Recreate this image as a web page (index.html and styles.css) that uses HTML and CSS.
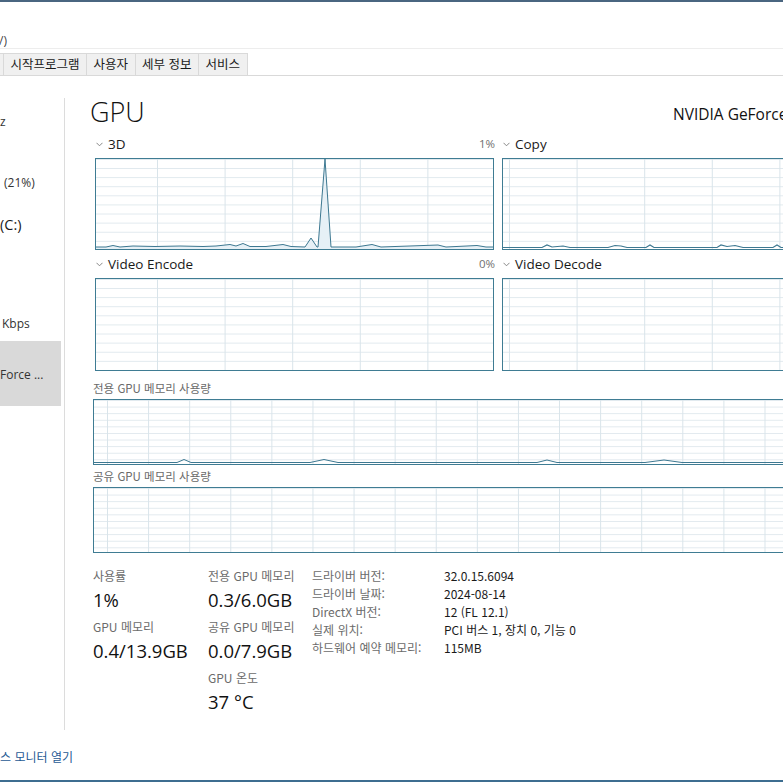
FILE: index.html
```html
<!DOCTYPE html>
<html lang="ko">
<head>
<meta charset="utf-8">
<title>작업 관리자 - GPU</title>
<link rel="stylesheet" href="styles.css">
</head>
<body>
<div class="window">
  <div class="titlebar"></div>
  <div class="menubar"><span class="menu-item">/)</span></div>
  <div class="tabbar">
    <div class="tab tab-cut"></div>
    <div class="tab">시작프로그램</div>
    <div class="tab">사용자</div>
    <div class="tab">세부 정보</div>
    <div class="tab">서비스</div>
  </div>

  <div class="main">
    <nav class="sidebar">
      <div class="side-frag f-cpu">z</div>
      <div class="side-frag f-mem">(21%)</div>
      <div class="side-frag side-title f-disk">(C:)</div>
      <div class="side-frag f-eth">Kbps</div>
      <div class="side-item selected"><div class="side-frag">Force ...</div></div>
    </nav>

    <section class="content">
      <header class="title-row">
        <h1 class="title">GPU</h1>
        <div class="gpu-name">NVIDIA GeForce RTX 3060 Laptop GPU</div>
      </header>

      <div class="engine-grid">
        <div class="engine">
          <div class="engine-head">
            <span class="engine-name"><svg class="chev" width="7" height="5" viewBox="0 0 7 5"><polyline points="0.5,0.8 3.5,3.8 6.5,0.8" fill="none" stroke="#7a7a7a" stroke-width="0.9"/></svg>3D</span>
            <span class="engine-pct">1%</span>
          </div>
          <div class="graph graph-left">
            <svg class="plot" width="397" height="90" viewBox="0 0 397 90">
              <polygon fill="#e6f0f6" points="0,88 10,88 17,86.5 24,88 37,87 59,87.5 84,87 107,87.5 120,87 134,85.5 140,87 147,84.5 154,87.5 170,87.5 187,85.5 195,87.5 209,88 215,79 221,88 222,88 229,0 235,88 260,88 276,85.5 285,88 342,86 350,88 381,86.5 390,88 397,88 397,90 0,90"/>
              <polyline fill="none" stroke="#3d7891" stroke-width="1" points="0,88 10,88 17,86.5 24,88 37,87 59,87.5 84,87 107,87.5 120,87 134,85.5 140,87 147,84.5 154,87.5 170,87.5 187,85.5 195,87.5 209,88 215,79 221,88 222,88 229,0 235,88 260,88 276,85.5 285,88 342,86 350,88 381,86.5 390,88 397,88"/>
            </svg>
          </div>
        </div>
        <div class="engine">
          <div class="engine-head">
            <span class="engine-name"><svg class="chev" width="7" height="5" viewBox="0 0 7 5"><polyline points="0.5,0.8 3.5,3.8 6.5,0.8" fill="none" stroke="#7a7a7a" stroke-width="0.9"/></svg>Copy</span>
            <span class="engine-pct"></span>
          </div>
          <div class="graph graph-right">
            <svg class="plot" width="397" height="90" viewBox="0 0 397 90">
              <polyline fill="none" stroke="#3d7891" stroke-width="1.2" points="0,88.5 39,88.5 44,86 49,88 60,87 67,88.5 105,88.5 112,86.5 118,87 124,88.5 143,88.5 147,86 151,88.5 214,88.5 218,86 224,87.5 232,86.5 240,88.5 270,88.5 274,86 278,88.5 397,88.5"/>
            </svg>
          </div>
        </div>
        <div class="engine">
          <div class="engine-head">
            <span class="engine-name"><svg class="chev" width="7" height="5" viewBox="0 0 7 5"><polyline points="0.5,0.8 3.5,3.8 6.5,0.8" fill="none" stroke="#7a7a7a" stroke-width="0.9"/></svg>Video Encode</span>
            <span class="engine-pct">0%</span>
          </div>
          <div class="graph graph-left graph-tall"></div>
        </div>
        <div class="engine">
          <div class="engine-head">
            <span class="engine-name"><svg class="chev" width="7" height="5" viewBox="0 0 7 5"><polyline points="0.5,0.8 3.5,3.8 6.5,0.8" fill="none" stroke="#7a7a7a" stroke-width="0.9"/></svg>Video Decode</span>
            <span class="engine-pct"></span>
          </div>
          <div class="graph graph-right graph-tall"></div>
        </div>
      </div>

      <div class="mem-block mem-first">
        <div class="mem-label">전용 GPU 메모리 사용량</div>
        <div class="mem-graph">
          <svg class="plot" width="808" height="64" viewBox="0 0 808 64">
            <polyline fill="none" stroke="#3d7891" stroke-width="1" points="0,62.5 83,62.5 90,59.5 97,62.5 216,62.5 230,59.5 244,62.5 443,62.5 453,60 463,62.5 551,62.5 570,60 588,62.5 808,62.5"/>
          </svg>
        </div>
      </div>
      <div class="mem-block">
        <div class="mem-label">공유 GPU 메모리 사용량</div>
        <div class="mem-graph"></div>
      </div>

      <div class="stats">
        <div class="stat-col col-1">
          <div class="stat"><div class="stat-label">사용률</div><div class="stat-value">1%</div></div>
          <div class="stat"><div class="stat-label">GPU 메모리</div><div class="stat-value">0.4/13.9GB</div></div>
        </div>
        <div class="stat-col col-2">
          <div class="stat"><div class="stat-label">전용 GPU 메모리</div><div class="stat-value">0.3/6.0GB</div></div>
          <div class="stat"><div class="stat-label">공유 GPU 메모리</div><div class="stat-value">0.0/7.9GB</div></div>
          <div class="stat"><div class="stat-label">GPU 온도</div><div class="stat-value">37 °C</div></div>
        </div>
        <dl class="props">
          <dt>드라이버 버전:</dt><dd>32.0.15.6094</dd>
          <dt>드라이버 날짜:</dt><dd>2024-08-14</dd>
          <dt>DirectX 버전:</dt><dd>12 (FL 12.1)</dd>
          <dt>실제 위치:</dt><dd>PCI 버스 1, 장치 0, 기능 0</dd>
          <dt>하드웨어 예약 메모리:</dt><dd>115MB</dd>
        </dl>
      </div>
    </section>
  </div>

  <footer class="footer"><a class="monitor-link" href="#">스 모니터 열기</a></footer>
  <div class="bottom-edge"></div>
</div>
</body>
</html>
```

FILE: styles.css
```css
html, body {
  margin: 0;
  padding: 0;
  background: #ffffff;
  overflow: hidden;
}

body {
  font-family: "Open Sans", "Noto Sans CJK KR", sans-serif;
  color: #1a1a1a;
}

.window {
  width: 783px;
  height: 783px;
  overflow: hidden;
  display: flex;
  flex-direction: column;
}

.titlebar {
  height: 2px;
  background: #4a6680;
  flex: none;
}

.menubar {
  height: 47px;
  box-sizing: border-box;
  padding-top: 32px;
  border-bottom: 1px solid #ededed;
  font-size: 12px;
  line-height: 14px;
  color: #444;
  flex: none;
}

.menu-item {
  display: inline-block;
  margin-left: -1px;
}

.tabbar {
  display: flex;
  padding-top: 4px;
  border-bottom: 1px solid #d9d9d9;
  height: 22px;
  flex: none;
}

.tab {
  font-family: "Noto Sans CJK KR", sans-serif;
  font-size: 12.5px;
  line-height: 20px;
  height: 22px;
  padding: 0 6.5px;
  background: #f0f0f0;
  border: 1px solid #d9d9d9;
  border-left: none;
  border-bottom: none;
  color: #1a1a1a;
  box-sizing: border-box;
  white-space: nowrap;
}

.tab-cut {
  width: 4px;
  padding: 0;
}

.main {
  display: flex;
  height: 663px;
  flex: none;
}

.sidebar {
  flex: none;
  width: 64px;
  height: 632px;
  margin-top: 22px;
  border-right: 1px solid #dcdcdc;
  display: flex;
  flex-direction: column;
}

.side-frag {
  font-size: 12px;
  line-height: 16px;
  color: #333;
  white-space: nowrap;
}

.side-title {
  font-size: 14.5px;
  line-height: 20px;
  color: #1a1a1a;
}

.f-cpu { margin-top: 16px; }
.f-mem { margin-top: 45px; padding-left: 4px; }
.f-disk { margin-top: 24px; }
.f-eth { margin-top: 81px; padding-left: 2px; }

.side-item.selected {
  margin-top: 9px;
  width: 61px;
  height: 65px;
  box-sizing: border-box;
  padding-top: 26px;
  background: #d9d9d9;
  overflow: hidden;
}

.content {
  flex: none;
  width: 810px;
  padding-left: 28px;
  padding-top: 18px;
}

.title-row {
  display: flex;
  align-items: flex-start;
}

.title {
  margin: 0;
  flex: 0 0 580px;
  font-size: 27px;
  font-weight: 300;
  line-height: 36px;
  color: #111;
  margin-left: -3px;
}

.gpu-name {
  margin-top: 10px;
  font-size: 15.5px;
  line-height: 20px;
  white-space: nowrap;
  color: #111;
  margin-left: 3px;
}

.engine-grid {
  display: grid;
  grid-template-columns: 399px 399px;
  column-gap: 8px;
  row-gap: 5px;
  padding-left: 2px;
  margin-top: 5px;
}

.engine-head {
  display: flex;
  justify-content: space-between;
  align-items: center;
  height: 18px;
  margin-bottom: 5px;
}

.engine-name {
  display: flex;
  align-items: center;
  font-size: 13.5px;
  line-height: 18px;
  color: #1a1a1a;
}

.chev {
  display: block;
  margin-left: 1px;
  margin-right: 5px;
}

.engine-pct {
  font-size: 11.5px;
  line-height: 18px;
  color: #707070;
  margin-right: -1px;
}

.graph {
  height: 92px;
  box-sizing: border-box;
  border: 1px solid #3f7c93;
  background-color: #ffffff;
  background-image:
    linear-gradient(to right, #d9e4ea 1px, transparent 1px),
    linear-gradient(to bottom, #dfe8ed 1px, transparent 1px);
  background-size: 67.6px 100%, 100% 9.1px;
}

.graph-left { background-position: 61px 0, 0 0; }
.graph-right { background-position: 6px 0, 0 0; }

.graph-tall { height: 93px; }

.plot {
  display: block;
}

.mem-block {
  margin-top: 3px;
}

.mem-first {
  margin-top: 9px;
}

.mem-label {
  font-family: "Noto Sans CJK KR", sans-serif;
  font-size: 11.5px;
  line-height: 16px;
  color: #6a6a6a;
  margin-bottom: 3px;
}

.mem-graph {
  width: 810px;
  height: 66px;
  box-sizing: border-box;
  border: 1px solid #3f7c93;
  background-image:
    linear-gradient(to right, #d9e4ea 1px, transparent 1px),
    linear-gradient(to bottom, #e1e9ee 1px, transparent 1px);
  background-size: 41.1px 100%, 100% 6.6px;
  background-position: 13px 0, 0 0;
}

.stats {
  display: flex;
  align-items: flex-start;
  margin-top: 15px;
}

.stat-col {
  flex: none;
}

.col-1 { width: 115px; }
.col-2 { width: 104px; }

.stat {
  margin-bottom: 7px;
}

.stat-label {
  font-family: "Noto Sans CJK KR", sans-serif;
  font-size: 12px;
  line-height: 16px;
  color: #6b6b6b;
  white-space: nowrap;
}

.stat-value {
  margin-top: 4px;
  font-size: 18.5px;
  line-height: 24px;
  color: #111;
  white-space: nowrap;
}

.props {
  margin: 0;
  margin-top: -1px;
  display: grid;
  grid-template-columns: 132px auto;
  align-content: start;
  font-family: "Noto Sans CJK KR", sans-serif;
  font-size: 12px;
  line-height: 18px;
}

.props dt {
  color: #6b6b6b;
  white-space: nowrap;
}

.props dd {
  margin: 0;
  color: #1a1a1a;
  white-space: nowrap;
}

.footer {
  height: 41px;
  box-sizing: border-box;
  padding-top: 10px;
  flex: none;
}

.monitor-link {
  font-family: "Noto Sans CJK KR", sans-serif;
  font-size: 12px;
  line-height: 16px;
  color: #1f5a94;
  text-decoration: none;
  display: block;
}

.bottom-edge {
  height: 2px;
  background: #3d6d90;
  flex: none;
}
```
